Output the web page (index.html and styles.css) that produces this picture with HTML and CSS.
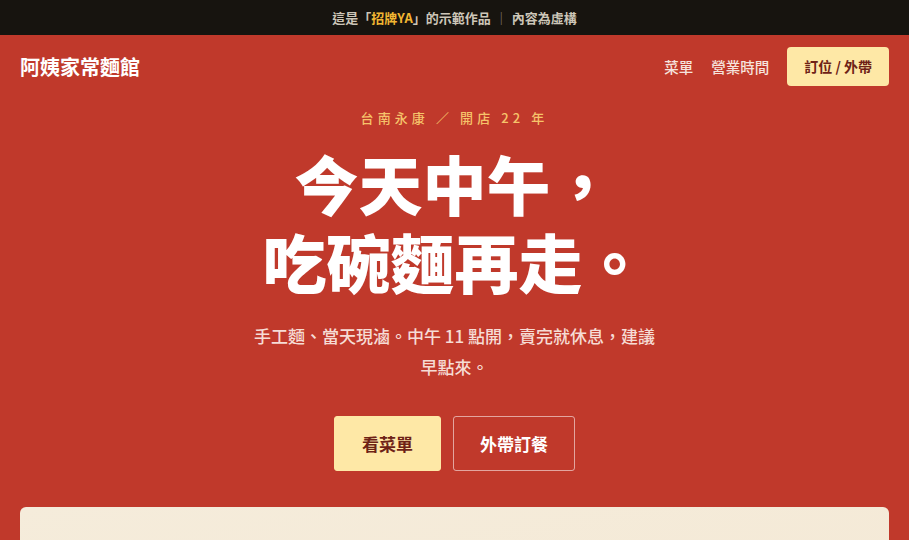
FILE: index.html
```html
<!DOCTYPE html>
<html lang="zh-Hant">
<head>
<meta charset="utf-8">
<title>阿姨家常麵館</title>
<link rel="stylesheet" href="styles.css">
</head>
<body>
<div class="topbar">這是「<span class="brand">招牌YA</span>」的示範作品 <span class="sep">｜</span> 內容為虛構</div>
<div class="page">
  <header class="nav">
    <div class="logo">阿姨家常麵館</div>
    <nav class="links">
      <a class="link">菜單</a>
      <a class="link">營業時間</a>
      <a class="btn-nav">訂位 / 外帶</a>
    </nav>
  </header>
  <section class="hero">
    <div class="eyebrow">台南永康 ／ 開店 22 年</div>
    <h1 class="title">今天中午，<br>吃碗麵再走。</h1>
    <p class="lead">手工麵、當天現滷。中午 11 點開，賣完就休息，建議早點來。</p>
    <div class="actions">
      <a class="btn btn-primary">看菜單</a>
      <a class="btn btn-ghost">外帶訂餐</a>
    </div>
  </section>
  <div class="card"></div>
</div>
</body>
</html>
```
FILE: styles.css
```css
* { box-sizing: border-box; }
html, body { margin: 0; padding: 0; }
body {
  font-family: "Noto Sans CJK TC", "Noto Sans", sans-serif;
  background: #c0392b;
  color: #fff;
  overflow: hidden;
  height: 540px;
}
.topbar {
  height: 35px;
  background: #17140f;
  color: #cdc6b8;
  font-size: 13px;
  font-weight: 700;
  display: flex;
  align-items: center;
  justify-content: center;
}
.topbar .brand { color: #f2b632; }
.topbar .sep { color: #8f887c; margin: 0 4px; font-weight: 400; }
.page { padding: 0 20px; }
.nav {
  display: flex;
  align-items: center;
  justify-content: space-between;
  padding: 12px 0 12px;
}
.logo {
  font-size: 20px;
  font-weight: 700;
  color: #fff;
}
.links {
  display: flex;
  align-items: center;
  gap: 18px;
}
.link {
  font-size: 14.5px;
  color: #f6e3dd;
  font-weight: 500;
}
.btn-nav {
  display: block;
  background: #fee8a6;
  color: #6e2216;
  font-weight: 700;
  font-size: 14px;
  height: 39px;
  line-height: 39px;
  padding: 0 17px;
  border-radius: 4px;
}
.hero {
  text-align: center;
  padding-top: 8px;
}
.eyebrow {
  font-size: 13px;
  letter-spacing: 4.1px;
  color: #f6c36a;
  font-weight: 500;
  line-height: 24px;
}
.title {
  margin: 13px 0 0;
  font-size: 64px;
  font-weight: 900;
  line-height: 78px;
  color: #fff;
}
.lead {
  margin: 21px auto 0;
  max-width: 406px;
  font-size: 17px;
  line-height: 31px;
  color: #f6dcd5;
  font-weight: 500;
}
.actions {
  display: flex;
  justify-content: center;
  gap: 12px;
  margin-top: 34px;
}
.btn {
  display: block;
  height: 55px;
  line-height: 53px;
  padding: 0 27px;
  font-size: 17px;
  font-weight: 700;
  border-radius: 3px;
  border: 1px solid transparent;
}
.btn-primary {
  background: #fee8a6;
  color: #6e2216;
  border-color: #fee8a6;
}
.btn-ghost {
  padding: 0 26px;
  color: #fff;
  border-color: rgba(255, 255, 255, 0.55);
}
.card {
  margin-top: 36px;
  height: 200px;
  border-radius: 6px;
  background: linear-gradient(170deg, #f5ecdb 0%, #f4e8d4 100%);
}
```
